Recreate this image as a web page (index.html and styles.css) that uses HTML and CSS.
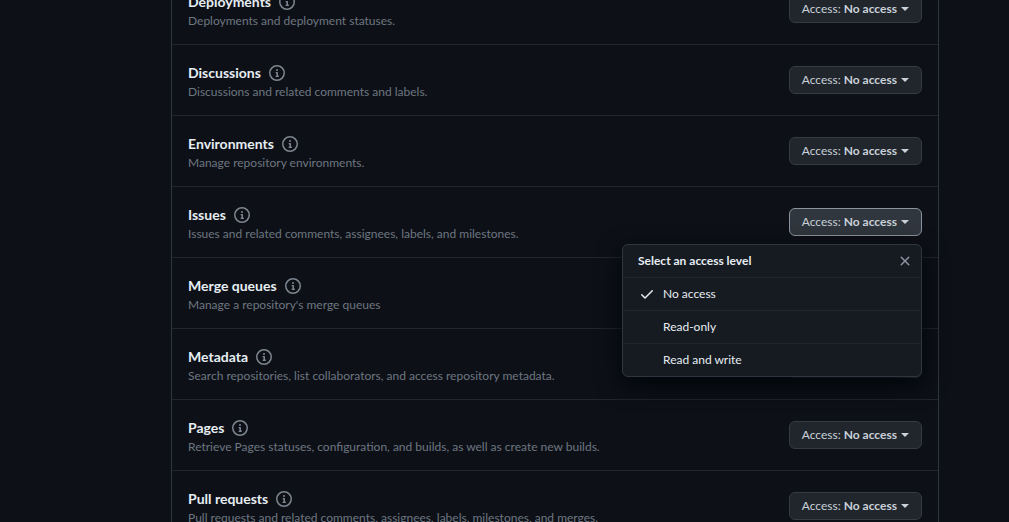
FILE: index.html
```html
<!DOCTYPE html>
<html lang="en">
<head>
  <meta charset="UTF-8">
  <meta name="viewport" content="width=device-width, initial-scale=1.0">
  <title>Repository permissions</title>
  <link rel="stylesheet" href="styles.css">
</head>
<body>
  <!-- shared icons -->
  <svg class="sprite" aria-hidden="true">
    <symbol id="icon-info" viewBox="0 0 16 16">
      <path d="M0 8a8 8 0 1 1 16 0A8 8 0 0 1 0 8Zm8-6.5a6.5 6.5 0 1 0 0 13 6.5 6.5 0 0 0 0-13ZM6.5 7.75A.75.75 0 0 1 7.25 7h1a.75.75 0 0 1 .75.75v2.75h.25a.75.75 0 0 1 0 1.5h-2a.75.75 0 0 1 0-1.5h.25v-2h-.25a.75.75 0 0 1-.75-.75ZM8 6a1 1 0 1 1 0-2 1 1 0 0 1 0 2Z"/>
    </symbol>
    <symbol id="icon-check" viewBox="0 0 16 16">
      <path d="M13.78 4.22a.75.75 0 0 1 0 1.06l-7.25 7.25a.75.75 0 0 1-1.06 0L2.22 9.28a.75.75 0 0 1 1.06-1.06L6 10.94l6.72-6.72a.75.75 0 0 1 1.06 0Z"/>
    </symbol>
    <symbol id="icon-x" viewBox="0 0 16 16">
      <path d="M3.72 3.72a.75.75 0 0 1 1.06 0L8 6.94l3.22-3.22a.75.75 0 1 1 1.06 1.06L9.06 8l3.22 3.22a.75.75 0 1 1-1.06 1.06L8 9.06l-3.22 3.22a.75.75 0 0 1-1.06-1.06L6.94 8 3.72 4.78a.75.75 0 0 1 0-1.06Z"/>
    </symbol>
  </svg>

  <main class="settings">
    <ul class="permissions">
      <li class="permission">
        <div class="permission-text">
          <h3 class="permission-name">Deployments <svg class="icon"><use href="#icon-info"/></svg></h3>
          <p class="permission-desc">Deployments and deployment statuses.</p>
        </div>
        <button class="btn" type="button">Access: <strong>No access</strong><span class="caret"></span></button>
      </li>
      <li class="permission">
        <div class="permission-text">
          <h3 class="permission-name">Discussions <svg class="icon"><use href="#icon-info"/></svg></h3>
          <p class="permission-desc">Discussions and related comments and labels.</p>
        </div>
        <button class="btn" type="button">Access: <strong>No access</strong><span class="caret"></span></button>
      </li>
      <li class="permission">
        <div class="permission-text">
          <h3 class="permission-name">Environments <svg class="icon"><use href="#icon-info"/></svg></h3>
          <p class="permission-desc">Manage repository environments.</p>
        </div>
        <button class="btn" type="button">Access: <strong>No access</strong><span class="caret"></span></button>
      </li>
      <li class="permission">
        <div class="permission-text">
          <h3 class="permission-name">Issues <svg class="icon"><use href="#icon-info"/></svg></h3>
          <p class="permission-desc">Issues and related comments, assignees, labels, and milestones.</p>
        </div>
        <div class="dropdown">
          <button class="btn btn-open" type="button" aria-expanded="true">Access: <strong>No access</strong><span class="caret"></span></button>
          <div class="menu">
            <div class="menu-header">
              <span class="menu-title">Select an access level</span>
              <button class="menu-close" type="button" aria-label="Close"><svg class="icon"><use href="#icon-x"/></svg></button>
            </div>
            <button class="menu-item selected" type="button"><svg class="icon"><use href="#icon-check"/></svg>No access</button>
            <button class="menu-item" type="button"><svg class="icon"><use href="#icon-check"/></svg>Read-only</button>
            <button class="menu-item" type="button"><svg class="icon"><use href="#icon-check"/></svg>Read and write</button>
          </div>
        </div>
      </li>
      <li class="permission">
        <div class="permission-text">
          <h3 class="permission-name">Merge queues <svg class="icon"><use href="#icon-info"/></svg></h3>
          <p class="permission-desc">Manage a repository's merge queues</p>
        </div>
        <button class="btn" type="button">Access: <strong>No access</strong><span class="caret"></span></button>
      </li>
      <li class="permission">
        <div class="permission-text">
          <h3 class="permission-name">Metadata <svg class="icon"><use href="#icon-info"/></svg></h3>
          <p class="permission-desc">Search repositories, list collaborators, and access repository metadata.</p>
        </div>
        <button class="btn" type="button">Access: <strong>No access</strong><span class="caret"></span></button>
      </li>
      <li class="permission">
        <div class="permission-text">
          <h3 class="permission-name">Pages <svg class="icon"><use href="#icon-info"/></svg></h3>
          <p class="permission-desc">Retrieve Pages statuses, configuration, and builds, as well as create new builds.</p>
        </div>
        <button class="btn" type="button">Access: <strong>No access</strong><span class="caret"></span></button>
      </li>
      <li class="permission">
        <div class="permission-text">
          <h3 class="permission-name">Pull requests <svg class="icon"><use href="#icon-info"/></svg></h3>
          <p class="permission-desc">Pull requests and related comments, assignees, labels, milestones, and merges.</p>
        </div>
        <button class="btn" type="button">Access: <strong>No access</strong><span class="caret"></span></button>
      </li>
    </ul>
  </main>
</body>
</html>
```
FILE: styles.css
```css
* {
  box-sizing: border-box;
}
body {
  margin: 0;
  height: 100vh;
  overflow: hidden;
  background-color: #0d1117;
  color: #e6edf3;
  font-family: "Segoe UI", Lato, "Open Sans", sans-serif;
  font-size: 12px;
  line-height: 18px;
}
button {
  font: inherit;
  cursor: pointer;
}
.sprite {
  display: none;
}
.icon {
  flex: none;
  width: 16px;
  height: 16px;
  fill: currentColor;
}
.settings {
  padding: 0 70px 0 171px;
}
.permissions {
  list-style: none;
  margin: -27px 0 0;
  padding: 0;
  border: 1px solid #30363d;
}
.permission {
  display: flex;
  align-items: center;
  justify-content: space-between;
  padding: 14px 16px;
}
.permission + .permission {
  border-top: 1px solid #21262d;
}
.permission-text {
  padding-top: 3px;
}
.permission-name {
  display: flex;
  align-items: center;
  gap: 8px;
  margin: 0;
  font-size: 14px;
  font-weight: 700;
  line-height: 21px;
}
.permission-name .icon {
  color: #7d8590;
}
.permission-desc {
  margin: 0;
  color: #6e7681;
}
.btn {
  display: flex;
  align-items: center;
  height: 28px;
  padding: 0 12px;
  border: 1px solid #363b42;
  border-radius: 6px;
  background-color: #21262d;
  color: #c9d1d9;
  white-space: pre;
}
.btn strong {
  font-weight: 700;
}
.btn-open {
  border-color: #8b949e;
  background-color: #30363d;
}
.caret {
  margin-left: 4px;
  border: 4px solid transparent;
  border-top-color: currentColor;
  border-bottom: 0;
}
.dropdown {
  position: relative;
}
.menu {
  position: absolute;
  z-index: 10;
  top: 100%;
  right: 0;
  width: 300px;
  margin-top: 8px;
  border: 1px solid #30363d;
  border-radius: 6px;
  background-color: #161b22;
  box-shadow: 0 8px 24px #010409;
  overflow: hidden;
}
.menu-header {
  display: flex;
  align-items: center;
  justify-content: space-between;
  height: 32px;
  padding: 0 8px 0 15px;
}
.menu-title {
  font-weight: 700;
}
.menu-close {
  display: flex;
  padding: 0;
  border: 0;
  background: none;
  color: #8b949e;
}
.menu-item {
  display: flex;
  align-items: center;
  gap: 8px;
  width: 100%;
  height: 33px;
  padding: 0 16px;
  border: 0;
  border-top: 1px solid #21262d;
  background: none;
  color: #e6edf3;
}
.menu-item .icon {
  visibility: hidden;
}
.menu-item.selected .icon {
  visibility: visible;
}
```
